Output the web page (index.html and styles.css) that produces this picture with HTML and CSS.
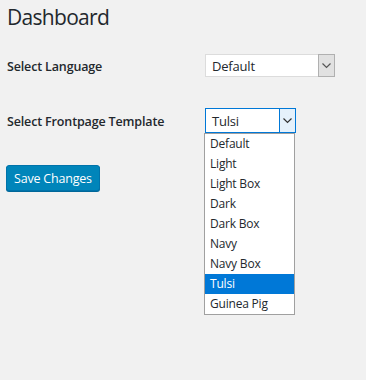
FILE: index.html
```html
<!DOCTYPE html>
<html>
  <head>
    <title>Dashboard</title>
    <link rel="stylesheet" href="styles.css">
  </head>
  <body>
    <div id="wrap">
      <h1 id="page-title">Dashboard</h1>
      <form id="settings-form">
        <div class="form-row">
          <label class="form-label">Select Language</label>
          <div class="select-box select-language">
            <span class="select-value">Default</span>
            <span class="select-arrow">
              <svg width="9" height="6" viewBox="0 0 9 6"><path d="M0.5 0.5 L4.5 4.5 L8.5 0.5" fill="none" stroke="#555" stroke-width="1.2"/></svg>
            </span>
          </div>
        </div>
        <div class="form-row">
          <label class="form-label">Select Frontpage Template</label>
          <div class="select-box select-template open">
            <span class="select-value">Tulsi</span>
            <span class="select-arrow">
              <svg width="9" height="6" viewBox="0 0 9 6"><path d="M0.5 0.5 L4.5 4.5 L8.5 0.5" fill="none" stroke="#333" stroke-width="1.2"/></svg>
            </span>
            <ul class="select-options">
              <li>Default</li>
              <li>Light</li>
              <li>Light Box</li>
              <li>Dark</li>
              <li>Dark Box</li>
              <li>Navy</li>
              <li>Navy Box</li>
              <li class="selected">Tulsi</li>
              <li>Guinea Pig</li>
            </ul>
          </div>
        </div>
        <div class="form-actions">
          <button type="button" id="save-button">Save Changes</button>
        </div>
      </form>
    </div>
  </body>
</html>
```

FILE: styles.css
```css
* {
  margin: 0;
  padding: 0;
  box-sizing: border-box;
}

body {
  font-family: "Open Sans", "Noto Sans", sans-serif;
  background-color: #f1f1f1;
  color: #23282d;
  width: 366px;
  height: 380px;
  overflow: hidden;
}

#wrap {
  padding: 3px 0 0 7px;
}

#page-title {
  font-size: 21px;
  font-weight: 400;
  line-height: 28px;
  letter-spacing: -0.7px;
  color: #23282d;
}

#settings-form {
  display: flex;
  flex-direction: column;
}

.form-row {
  display: flex;
  align-items: center;
  margin-top: 23px;
}

.form-row + .form-row {
  margin-top: 31px;
}

.form-label {
  width: 198px;
  padding-top: 2px;
  font-size: 12.5px;
  font-weight: 600;
  letter-spacing: -0.15px;
  color: #23282d;
}

.select-box {
  position: relative;
  display: flex;
  align-items: stretch;
  height: 23px;
  background-color: #fff;
  border: 1px solid #dcdcdc;
  font-size: 13px;
  letter-spacing: -0.2px;
  color: #23282d;
}

.select-language {
  width: 130px;
}

.select-template {
  width: 91px;
  height: 25px;
  border-color: #0078d7;
}

.select-value {
  flex: 1;
  display: flex;
  align-items: center;
  padding-left: 6px;
}

.select-arrow {
  width: 17px;
  display: flex;
  align-items: center;
  justify-content: center;
  background-color: #e1e1e1;
  border: 1px solid #b0b0b0;
  margin: -1px -1px -1px 0;
}

.select-template .select-arrow {
  background-color: #e5f1fb;
  border-color: #0078d7;
}

.select-options {
  position: absolute;
  top: 24px;
  left: -2px;
  width: 91px;
  list-style: none;
  background-color: #fff;
  border: 1px solid #a0a0a0;
  z-index: 10;
}

.select-options li {
  height: 20px;
  line-height: 20px;
  padding-left: 5px;
  font-size: 12px;
  letter-spacing: -0.2px;
  color: #23282d;
}

.select-options li.selected {
  background-color: #0078d7;
  color: #fff;
}

.form-actions {
  margin-top: 32px;
}

#save-button {
  height: 26px;
  padding: 0 7px;
  font-family: inherit;
  font-size: 12.5px;
  letter-spacing: -0.2px;
  color: #fff;
  background-color: #0085ba;
  border: 1px solid #0073aa;
  border-radius: 3px;
  box-shadow: 0 1px 0 #006799;
  cursor: pointer;
  margin-left: -1px;
}
```
